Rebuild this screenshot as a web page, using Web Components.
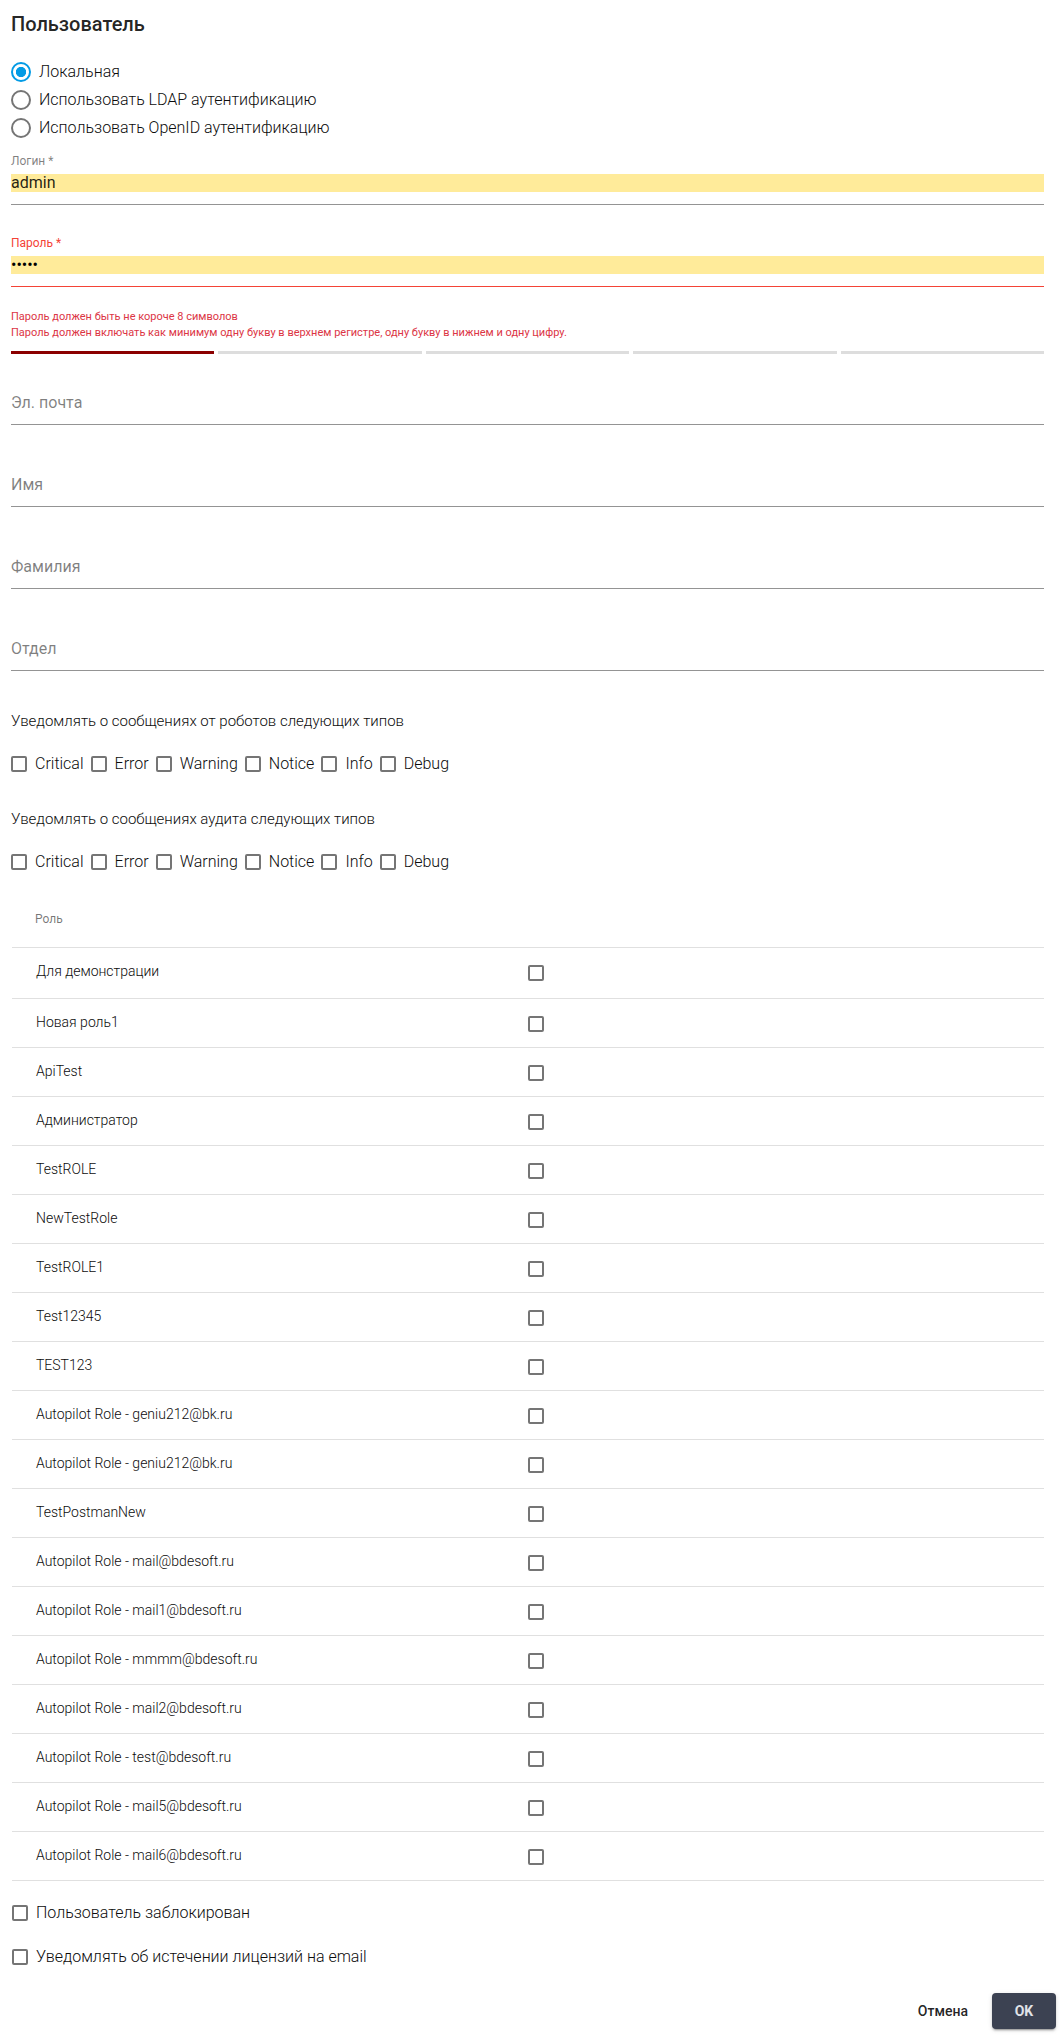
<!DOCTYPE html>
<html lang="ru">
<head>
<meta charset="utf-8">
<meta name="viewport" content="width=device-width, initial-scale=1">
<title>Пользователь</title>
<style>
  body { margin: 0; background: #fff; font-family: Roboto, "Liberation Sans", sans-serif; font-size: 16px; font-weight: 300; color: #0c0c0c; }
</style>
</head>
<body>
<user-form></user-form>

<script>
const checkStyles = `
  input[type=checkbox] {
    appearance: none; box-sizing: border-box; flex: none; width: 16px; height: 16px; margin: 0;
    border: 2px solid #757575; border-radius: 2px; background: #fff;
  }
  input[type=checkbox]:checked { background: #039be5; border-color: #039be5; }
`;

class BaseElement extends HTMLElement {
  connectedCallback() {
    if (this.shadowRoot) return;
    this.attachShadow({ mode: 'open' }).innerHTML = this.render();
  }
}

customElements.define('ui-radio', class extends BaseElement {
  render() {
    return `<style>
      :host { display: block; }
      label { display: flex; align-items: center; gap: 8px; height: 28px; line-height: 24px; }
      input {
        appearance: none; box-sizing: border-box; flex: none; width: 20px; height: 20px; margin: 0;
        border: 2px solid #757575; border-radius: 50%;
      }
      input:checked { border-color: #039be5; background: radial-gradient(circle closest-side, #039be5 0 60%, #fff 68%); }
      span { padding-bottom: 1px; }
    </style>
    <label><input type="radio" ${this.hasAttribute('checked') ? 'checked' : ''}><span><slot></slot></span></label>`;
  }
  connectedCallback() {
    super.connectedCallback();
    // Inputs in separate shadow roots do not share a radio group, so siblings are cleared here.
    this.shadowRoot.querySelector('input').onchange = () => {
      for (const other of this.parentNode.querySelectorAll('ui-radio')) {
        if (other !== this) other.shadowRoot.querySelector('input').checked = false;
      }
    };
  }
});

customElements.define('ui-checkbox', class extends BaseElement {
  render() {
    return `<style>${checkStyles}
      :host { display: block; }
      label { display: flex; align-items: center; gap: 8px; height: 24px; line-height: 24px; }
      span { padding-bottom: 1px; }
    </style>
    <label><input type="checkbox"><span><slot></slot></span></label>`;
  }
});

customElements.define('ui-field', class extends BaseElement {
  render() {
    const value = this.getAttribute('value') || '';
    return `<style>
      :host { display: block; font-weight: 400; color: rgba(0, 0, 0, .87); }
      .field {
        display: grid; grid-template-rows: 18px 18px; row-gap: 4px;
        padding-bottom: 12px; border-bottom: 1px solid #949494;
      }
      label { grid-area: 2 / 1; font-size: 16px; line-height: 18px; color: rgba(0, 0, 0, .5); pointer-events: none; }
      .filled label { grid-area: 1 / 1; font-size: 12px; }
      input {
        grid-area: 2 / 1; box-sizing: border-box; width: 100%; height: 18px; margin: 0; padding: 0;
        border: 0; outline: 0; background: transparent; font: inherit; line-height: 18px; color: inherit;
      }
      .filled input { background: #ffeb9a; }
      :host([invalid]) .field { border-color: #f44336; }
      :host([invalid]) label { color: #f44336; }
      input[type=password] { color: #000; }
    </style>
    <div class="field ${value ? 'filled' : ''}">
      <input id="control" type="${this.getAttribute('type') || 'text'}" value="${value}">
      <label for="control"><slot></slot></label>
    </div>`;
  }
});

customElements.define('password-strength', class extends BaseElement {
  render() {
    const level = Number(this.getAttribute('level'));
    return `<style>
      :host { display: grid; grid-template-columns: repeat(5, 1fr); gap: 4px; }
      i { height: 3px; background: #ddd; }
      i.on { background: #8b0000; }
    </style>` + [1, 2, 3, 4, 5].map(n => `<i class="${n <= level ? 'on' : ''}"></i>`).join('');
  }
});

customElements.define('notify-group', class extends BaseElement {
  render() {
    return `<style>
      :host { display: block; }
      fieldset { border: 0; margin: 0; padding: 0; min-width: 0; }
      legend { padding: 0; margin-bottom: 19px; font-size: 15px; line-height: 24px; }
      div { display: flex; flex-wrap: wrap; gap: 7px; }
    </style>
    <fieldset><legend><slot></slot></legend>
      <div>${['Critical', 'Error', 'Warning', 'Notice', 'Info', 'Debug'].map(t => `<ui-checkbox>${t}</ui-checkbox>`).join('')}</div>
    </fieldset>`;
  }
});

customElements.define('role-table', class extends BaseElement {
  render() {
    const roles = ['Для демонстрации', 'Новая роль1', 'ApiTest', 'Администратор', 'TestROLE', 'NewTestRole',
      'TestROLE1', 'Test12345', 'TEST123', 'Autopilot Role - geniu212@bk.ru', 'Autopilot Role - geniu212@bk.ru',
      'TestPostmanNew', 'Autopilot Role - mail@bdesoft.ru', 'Autopilot Role - mail1@bdesoft.ru',
      'Autopilot Role - mmmm@bdesoft.ru', 'Autopilot Role - mail2@bdesoft.ru', 'Autopilot Role - test@bdesoft.ru',
      'Autopilot Role - mail5@bdesoft.ru', 'Autopilot Role - mail6@bdesoft.ru'];
    return `<style>${checkStyles}
      :host { display: block; }
      table { width: 100%; table-layout: fixed; border-collapse: separate; border-spacing: 0; font-size: 14px; }
      th, td { box-sizing: border-box; border-bottom: 1px solid #e0e0e0; padding: 0; text-align: left; }
      th { height: 57px; padding-left: 23px; font-size: 12px; font-weight: 400; color: rgba(0, 0, 0, .54); }
      td { height: 49px; padding-top: 13px; vertical-align: top; line-height: 20px; }
      td:first-child { padding-left: 24px; }
      td:last-child { padding-top: 17px; }
      tbody tr:first-child td { height: 51px; }
      input[type=checkbox] { display: block; }
    </style>
    <table>
      <thead><tr><th>Роль</th><th></th></tr></thead>
      <tbody>${roles.map((r, i) => `<tr><td><label for="role${i}">${r}</label></td><td><input type="checkbox" id="role${i}"></td></tr>`).join('')}</tbody>
    </table>`;
  }
});

customElements.define('ui-button', class extends BaseElement {
  render() {
    return `<style>
      :host { display: block; color: rgba(0, 0, 0, .87); }
      button {
        display: block; height: 36px; min-width: 64px; padding: 0 16px; border: 0; border-radius: 4px;
        background: transparent; color: inherit; font: 500 14px/36px Roboto, "Liberation Sans", sans-serif;
      }
      :host([primary]) button {
        background: #3c4252; color: #e0e3e8; font-weight: 700;
        box-shadow: 0 3px 1px -2px rgba(0,0,0,.2), 0 2px 2px rgba(0,0,0,.14), 0 1px 5px rgba(0,0,0,.12);
      }
    </style>
    <button type="button"><slot></slot></button>`;
  }
});

customElements.define('user-form', class extends BaseElement {
  render() {
    return `<style>
      :host { display: block; padding: 8px 4px 14px 11px; }
      main { margin-right: 12px; }
      h1 { margin: 0 0 18px; font-size: 20px; line-height: 32px; font-weight: 500; color: rgba(0, 0, 0, .87); }
      .fields { display: flex; flex-direction: column; gap: 29px; }
      .account { margin-top: 10px; }
      .errors { margin: 22px 0 10px; font-size: 11px; line-height: 16px; font-weight: 400; color: #dc3545; }
      .errors p { margin: 0; }
      .person { margin-top: 18px; }
      .notify { display: flex; flex-direction: column; gap: 31px; margin: 38px 0 17px; }
      .access { padding-left: 1px; }
      .flags { display: flex; flex-direction: column; gap: 20px; margin-top: 20px; }
      footer { display: flex; justify-content: flex-end; gap: 8px; margin-top: 24px; }
    </style>
    <main>
      <h1>Пользователь</h1>
      <div role="radiogroup" aria-label="Аутентификация">
        <ui-radio checked>Локальная</ui-radio>
        <ui-radio>Использовать LDAP аутентификацию</ui-radio>
        <ui-radio>Использовать OpenID аутентификацию</ui-radio>
      </div>
      <div class="fields account">
        <ui-field value="admin">Логин *</ui-field>
        <ui-field type="password" value="admin" invalid>Пароль *</ui-field>
      </div>
      <div class="errors">
        <p>Пароль должен быть не короче 8 символов</p>
        <p>Пароль должен включать как минимум одну букву в верхнем регистре, одну букву в нижнем и одну цифру.</p>
      </div>
      <password-strength level="1"></password-strength>
      <div class="fields person">
        <ui-field>Эл. почта</ui-field>
        <ui-field>Имя</ui-field>
        <ui-field>Фамилия</ui-field>
        <ui-field>Отдел</ui-field>
      </div>
      <div class="notify">
        <notify-group>Уведомлять о сообщениях от роботов следующих типов</notify-group>
        <notify-group>Уведомлять о сообщениях аудита следующих типов</notify-group>
      </div>
      <div class="access">
        <role-table></role-table>
        <div class="flags">
          <ui-checkbox>Пользователь заблокирован</ui-checkbox>
          <ui-checkbox>Уведомлять об истечении лицензий на email</ui-checkbox>
        </div>
      </div>
    </main>
    <footer>
      <ui-button>Отмена</ui-button>
      <ui-button primary>OK</ui-button>
    </footer>`;
  }
});
</script>
</body>
</html>
